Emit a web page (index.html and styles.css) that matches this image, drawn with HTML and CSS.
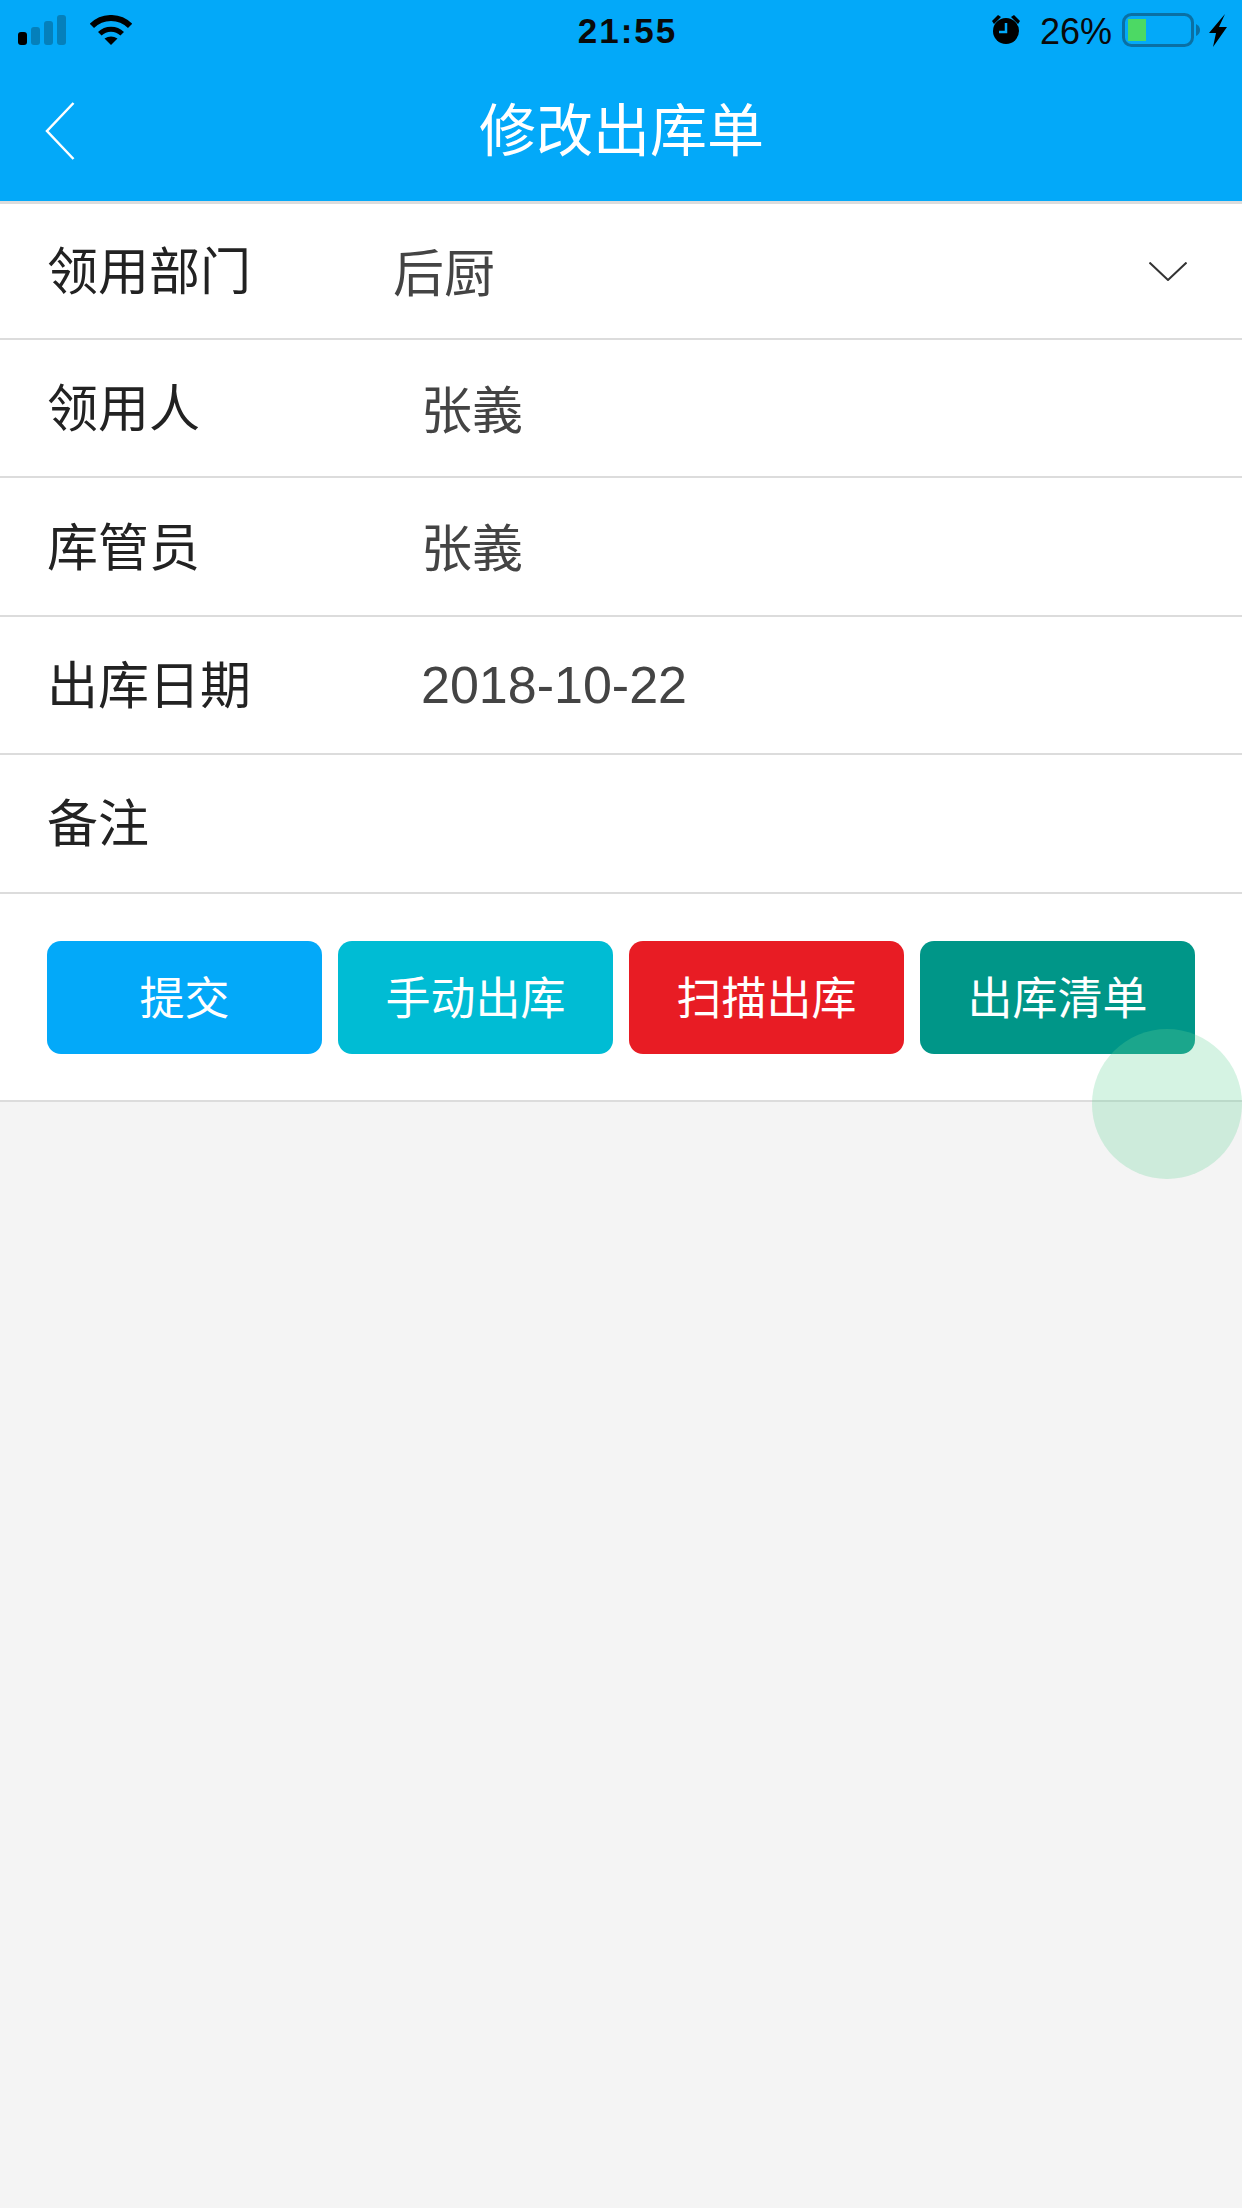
FILE: index.html
```html
<!DOCTYPE html>
<html lang="zh-CN">
<head>
    <meta charset="utf-8">
    <meta name="viewport" content="width=device-width, initial-scale=1">
    <title>修改出库单</title>
    <link rel="stylesheet" href="styles.css">
</head>
<body>
    <header class="app-header">
        <div class="status-bar">
            <div class="status-left">
                <svg class="icon-signal" viewBox="0 0 48 30">
                    <rect x="0" y="17" width="9" height="13" rx="3"/>
                    <rect class="dim" x="13" y="12" width="9" height="18" rx="3"/>
                    <rect class="dim" x="26" y="6" width="9" height="24" rx="3"/>
                    <rect class="dim" x="39" y="0" width="9" height="30" rx="3"/>
                </svg>
                <svg class="icon-wifi" viewBox="0 0 42 30">
                    <path class="wifi-outer" d="M1.900 10.900A27 27 0 0 1 40.100 10.900"/>
                    <path class="wifi-inner" d="M9.800 18.800A15.800 15.800 0 0 1 32.200 18.800"/>
                    <path d="M21 30L14.500 23.500Q21 19.500 27.500 23.500Z"/>
                </svg>
            </div>
            <div class="status-time">21:55</div>
            <div class="status-right">
                <svg class="icon-alarm" viewBox="0 0 28 29">
                    <circle cx="14" cy="16" r="13"/>
                    <path d="M0 6L6 0L9 2L2 9Z"/>
                    <path d="M28 6L22 0L19 2L26 9Z"/>
                    <path class="alarm-hand" d="M14 8V17H7"/>
                </svg>
                <span class="status-battery-text">26%</span>
                <svg class="icon-battery" viewBox="0 0 78 34">
                    <rect class="battery-shell" x="1.500" y="1.500" width="69" height="31" rx="8"/>
                    <rect class="battery-level" x="6" y="6" width="18" height="22"/>
                    <path class="battery-nub" d="M74 11Q78 13 78 17Q78 21 74 23Z"/>
                </svg>
                <svg class="icon-bolt" viewBox="0 0 18 33">
                    <path d="M16 0L0 19H7L4 33L18 13H10Z"/>
                </svg>
            </div>
        </div>
        <div class="nav-bar">
            <svg class="icon-back" viewBox="0 0 30 58">
                <path d="M28.500 1L2 29L28.500 57"/>
            </svg>
            <h1 class="nav-title">修改出库单</h1>
        </div>
    </header>

    <main>
        <section class="form-list">
            <div class="form-row form-row-select">
                <span class="row-label">领用部门</span>
                <span class="row-value">后厨</span>
                <svg class="icon-down" viewBox="0 0 38 19">
                    <path d="M0.500 0.500L19 18L37.500 0.500"/>
                </svg>
            </div>
            <div class="form-row">
                <span class="row-label">领用人</span>
                <span class="row-value">张義</span>
            </div>
            <div class="form-row">
                <span class="row-label">库管员</span>
                <span class="row-value">张義</span>
            </div>
            <div class="form-row">
                <span class="row-label">出库日期</span>
                <span class="row-value row-date">2018-10-22</span>
            </div>
            <div class="form-row">
                <span class="row-label">备注</span>
            </div>
        </section>

        <div class="actions">
            <button type="button" class="btn btn-submit">提交</button>
            <button type="button" class="btn btn-manual">手动出库</button>
            <button type="button" class="btn btn-scan">扫描出库</button>
            <button type="button" class="btn btn-list">出库清单</button>
        </div>
    </main>

    <div class="float-ball"></div>
</body>
</html>
```

FILE: styles.css
```css
* {
    margin: 0;
    padding: 0;
    box-sizing: border-box;
    font-family: 'Liberation Sans', 'Noto Sans CJK SC', sans-serif;
}

body {
    position: relative;
    width: 1242px;
    height: 2208px;
    overflow: hidden;
    background: #f4f4f4;
}

.app-header {
    height: 204px;
    background: #03a9f9;
    border-bottom: 3px solid #dcdcdc;
}

.status-bar {
    display: grid;
    grid-template-columns: 1fr auto 1fr;
    align-items: start;
    height: 60px;
    padding: 13px 15px 0 18px;
}

.status-left,
.status-right {
    display: flex;
    align-items: flex-start;
}

.status-right {
    justify-content: flex-end;
}

.status-time {
    margin: -2px 0 0 10px;
    font-size: 35px;
    line-height: 40px;
    font-weight: 700;
    letter-spacing: 2px;
    color: #0a0a0a;
}

.icon-signal {
    width: 48px;
    height: 30px;
    margin-top: 2px;
    fill: #000;
}

.icon-signal .dim {
    fill: #0580bb;
}

.icon-wifi {
    width: 42px;
    height: 30px;
    margin: 2px 0 0 24px;
    fill: #000;
}

.wifi-outer,
.wifi-inner {
    fill: none;
    stroke: #000;
}

.wifi-outer {
    stroke-width: 6;
}

.wifi-inner {
    stroke-width: 5;
}

.icon-alarm {
    width: 28px;
    height: 29px;
    margin-top: 2px;
    fill: #000;
}

.alarm-hand {
    fill: none;
    stroke: #03a9f9;
    stroke-width: 2.500;
}

.status-battery-text {
    margin: -1px 0 0 20px;
    font-size: 36px;
    line-height: 40px;
    color: #0a0a0a;
}

.icon-battery {
    width: 78px;
    height: 34px;
    margin-left: 10px;
}

.battery-shell {
    fill: none;
    stroke: #0a70a4;
    stroke-width: 3;
}

.battery-level {
    fill: #4cd964;
}

.battery-nub {
    fill: #0a70a4;
}

.icon-bolt {
    width: 18px;
    height: 33px;
    margin: 1px 0 0 9px;
    fill: #000;
}

.nav-bar {
    display: grid;
    grid-template-columns: 1fr auto 1fr;
    align-items: center;
    height: 141px;
    padding: 0 0 0 45px;
}

.icon-back {
    width: 30px;
    height: 58px;
    margin-top: 1px;
    fill: none;
    stroke: #fff;
    stroke-width: 2.500;
}

.nav-title {
    font-size: 57px;
    line-height: 70px;
    font-weight: 400;
    color: #fff;
    transform: translateX(-22px);
}

.form-list {
    background: #fff;
}

.form-row {
    display: flex;
    align-items: center;
    height: 138.400px;
    padding: 0 47px;
    border-bottom: 2px solid #dcdcdc;
}

.form-row-select {
    height: 136px;
    padding-right: 55px;
}

.row-label {
    width: 374px;
    margin-bottom: 6px;
    font-size: 51px;
    color: #222;
}

.form-row-select .row-label {
    width: 346px;
}

.row-value {
    flex: 1;
    margin-bottom: 3px;
    font-size: 51px;
    color: #444;
}

.row-date {
    margin-bottom: 0;
    font-size: 52px;
}

.icon-down {
    width: 38px;
    height: 19px;
    fill: none;
    stroke: #333;
    stroke-width: 2;
}

.actions {
    display: flex;
    gap: 16px;
    height: 208px;
    padding: 47px 47px 46px;
    background: #fff;
    border-bottom: 2px solid #dcdcdc;
}

.btn {
    flex: 1;
    height: 113px;
    padding-bottom: 4px;
    border: none;
    border-radius: 14px;
    font-size: 45px;
    color: #fff;
}

.btn-submit {
    background: #03a9f9;
}

.btn-manual {
    background: #00bcd4;
}

.btn-scan {
    background: #e81c24;
}

.btn-list {
    background: #009688;
}

.float-ball {
    position: absolute;
    top: 1029px;
    left: 1092px;
    width: 150px;
    height: 150px;
    border-radius: 50%;
    background: rgba(100, 210, 150, 0.27);
}
```
